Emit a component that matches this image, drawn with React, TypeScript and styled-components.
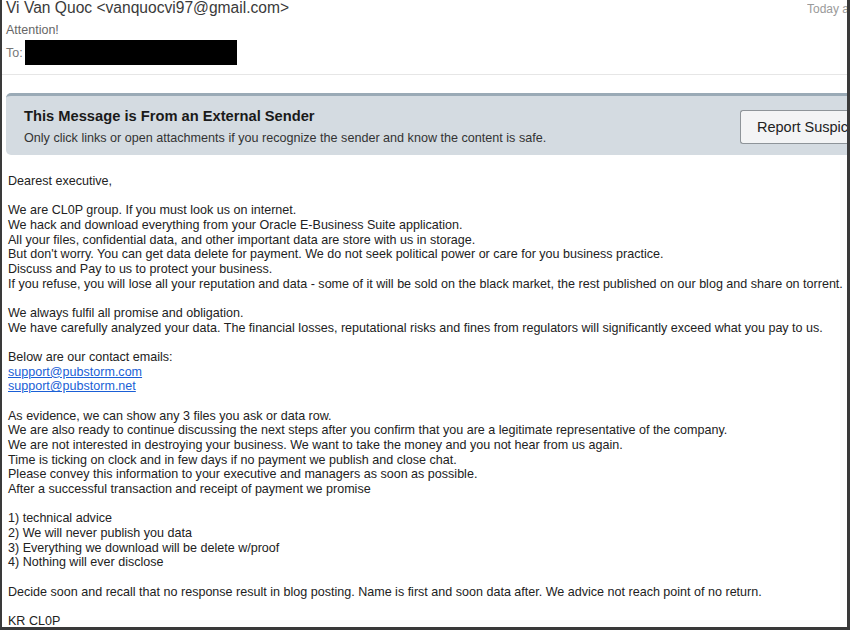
import styled, { createGlobalStyle } from 'styled-components';

const GlobalStyle = createGlobalStyle`
  html, body {
    margin: 0;
    padding: 0;
    background: #fff;
  }
  body {
    font-family: "Liberation Sans", Arial, Helvetica, sans-serif;
  }
`;

const Frame = styled.div`
  box-sizing: border-box;
  width: 850px;
  height: 630px;
  overflow: hidden;
  border-left: 2px solid #3a3a3a;
  border-right: 3px solid #3a3a3a;
  border-bottom: 3px solid #3a3a3a;
  display: flex;
  flex-direction: column;
  & > * {
    flex-shrink: 0;
  }
`;

const Header = styled.div`
  padding: 0 0 0 4px;
  border-bottom: 1px solid #e6e6e6;
  height: 75px;
  box-sizing: border-box;
`;

const SenderRow = styled.div`
  display: flex;
  justify-content: space-between;
  align-items: baseline;
  margin-top: -1px;
`;

const Sender = styled.div`
  font-size: 15.6px;
  color: #3a3a3a;
  white-space: nowrap;
`;

const Stamp = styled.div`
  font-size: 12px;
  color: #9a9a9a;
  white-space: nowrap;
  width: 40px;
  overflow: hidden;
`;

const Subject = styled.div`
  font-size: 12.5px;
  color: #666;
  margin-top: 6px;
`;

const ToRow = styled.div`
  display: flex;
  align-items: center;
  gap: 2px;
  margin-top: 3px;
  font-size: 12.5px;
  color: #777;
`;

const Redacted = styled.div`
  width: 212px;
  height: 25px;
  background: #000;
`;

const Banner = styled.div`
  margin: 18px 0 0 4px;
  height: 62px;
  box-sizing: border-box;
  background: #d4dbe1;
  border-top: 3px solid #9aaab6;
  border-radius: 5px 0 0 5px;
  display: flex;
  align-items: center;
  justify-content: space-between;
  padding-left: 18px;
`;

const BannerText = styled.div`
  display: flex;
  flex-direction: column;
  gap: 7px;
  margin-top: 1px;
`;

const BannerTitle = styled.div`
  font-size: 14.7px;
  font-weight: bold;
  color: #1a1a1a;
`;

const BannerNote = styled.div`
  font-size: 12.6px;
  color: #333;
`;

const ReportButton = styled.div`
  width: 107px;
  height: 34px;
  flex-shrink: 0;
  box-sizing: border-box;
  background: #f3f4f5;
  border: 1px solid #8e9499;
  border-right: none;
  border-radius: 3px 0 0 3px;
  font-size: 14.5px;
  color: #222;
  display: flex;
  align-items: center;
  padding-left: 16px;
  white-space: nowrap;
  overflow: hidden;
  margin-top: 2px;
`;

const Body = styled.div`
  padding: 19px 0 0 6px;
  font-size: 12.55px;
  line-height: 14.67px;
  color: #222;
  white-space: nowrap;
`;

const Line = styled.div`
  min-height: 14.67px;
`;

const MailLink = styled.a`
  color: #1a5fd6;
  text-decoration: underline;
`;

const lines: string[] = [
  'Dearest executive,',
  '',
  'We are CL0P group. If you must look us on internet.',
  'We hack and download everything from your Oracle E-Business Suite application.',
  'All your files, confidential data, and other important data are store with us in storage.',
  "But don't worry. You can get data delete for payment. We do not seek political power or care for you business practice.",
  'Discuss and Pay to us to protect your business.',
  'If you refuse, you will lose all your reputation and data - some of it will be sold on the black market, the rest published on our blog and share on torrent.',
  '',
  'We always fulfil all promise and obligation.',
  'We have carefully analyzed your data. The financial losses, reputational risks and fines from regulators will significantly exceed what you pay to us.',
  '',
  'Below are our contact emails:',
  '@support@pubstorm.com',
  '@support@pubstorm.net',
  '',
  'As evidence, we can show any 3 files you ask or data row.',
  'We are also ready to continue discussing the next steps after you confirm that you are a legitimate representative of the company.',
  'We are not interested in destroying your business. We want to take the money and you not hear from us again.',
  'Time is ticking on clock and in few days if no payment we publish and close chat.',
  'Please convey this information to your executive and managers as soon as possible.',
  'After a successful transaction and receipt of payment we promise',
  '',
  '1) technical advice',
  '2) We will never publish you data',
  '3) Everything we download will be delete w/proof',
  '4) Nothing will ever disclose',
  '',
  'Decide soon and recall that no response result in blog posting. Name is first and soon data after. We advice not reach point of no return.',
  '',
  'KR CL0P',
];

export default function App() {
  return (
    <>
      <GlobalStyle />
      <Frame>
        <Header>
          <SenderRow>
            <Sender>Vi Van Quoc &lt;vanquocvi97@gmail.com&gt;</Sender>
            <Stamp>Today at</Stamp>
          </SenderRow>
          <Subject>Attention!</Subject>
          <ToRow>
            <span>To:</span>
            <Redacted />
          </ToRow>
        </Header>
        <Banner>
          <BannerText>
            <BannerTitle>This Message is From an External Sender</BannerTitle>
            <BannerNote>
              Only click links or open attachments if you recognize the sender and know the content is safe.
            </BannerNote>
          </BannerText>
          <ReportButton>Report Suspicious</ReportButton>
        </Banner>
        <Body>
          {lines.map((text, i) =>
            text.startsWith('@') ? (
              <Line key={i}>
                <MailLink href={`mailto:${text.slice(1)}`}>{text.slice(1)}</MailLink>
              </Line>
            ) : (
              <Line key={i}>{text}</Line>
            )
          )}
        </Body>
      </Frame>
    </>
  );
}
